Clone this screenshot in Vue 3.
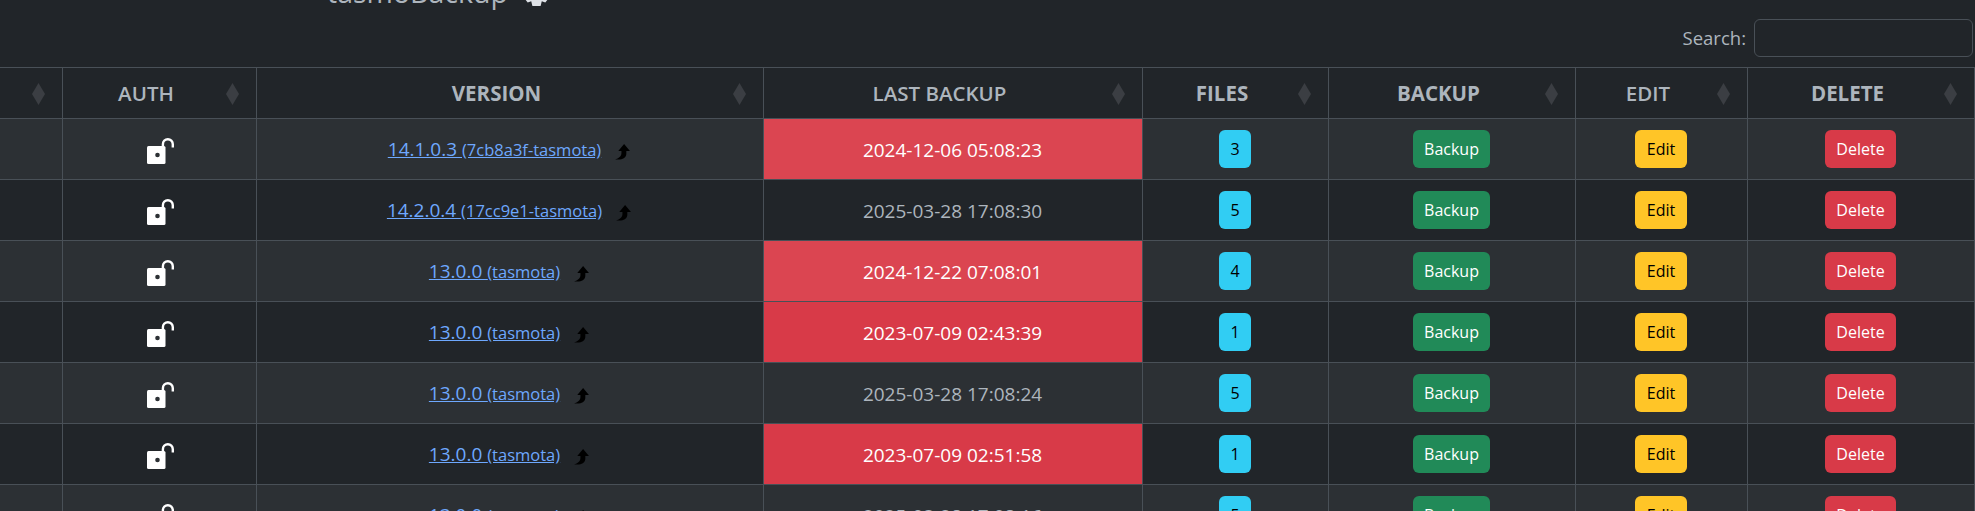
<script setup>
const rows = [
  { v: '14.1.0.3', b: '7cb8a3f-tasmota', date: '2024-12-06 05:08:23', red: true, files: 3 },
  { v: '14.2.0.4', b: '17cc9e1-tasmota', date: '2025-03-28 17:08:30', red: false, files: 5 },
  { v: '13.0.0', b: 'tasmota', date: '2024-12-22 07:08:01', red: true, files: 4 },
  { v: '13.0.0', b: 'tasmota', date: '2023-07-09 02:43:39', red: true, files: 1 },
  { v: '13.0.0', b: 'tasmota', date: '2025-03-28 17:08:24', red: false, files: 5 },
  { v: '13.0.0', b: 'tasmota', date: '2023-07-09 02:51:58', red: true, files: 1 },
  { v: '13.0.0', b: 'tasmota', date: '2025-03-28 17:08:16', red: false, files: 5 }
]
const heads = [
  { t: '', w: 62 },
  { t: 'AUTH', w: 194, cls: 'semi' },
  { t: 'VERSION', w: 507 },
  { t: 'LAST BACKUP', w: 379, cls: 'semi' },
  { t: 'FILES', w: 186 },
  { t: 'BACKUP', w: 247 },
  { t: 'EDIT', w: 172, cls: 'semi' },
  { t: 'DELETE', w: 227 }
]
</script>

<template>
  <div class="page">
    <div class="title">
      <span>tasmoBackup</span>
      <svg class="gear" viewBox="0 0 23 23" width="27" height="27"><path d="M8 0h7l1 4 3-1 4 5-3 3.500 3 3.500-4 5-3-1-1 4H8l-1-4-3 1-4-5 3-3.500L0 8l4-5 3 1z" fill="#dee2e6"/></svg>
    </div>
    <div class="searchbar">
      <label class="search-label">Search:</label>
      <input class="search-input" type="text" />
    </div>
    <table class="grid">
      <colgroup>
        <col v-for="(h, i) in heads" :key="i" :style="{ width: h.w + 'px' }" />
      </colgroup>
      <thead>
        <tr>
          <th v-for="(h, i) in heads" :key="i" :class="h.cls">
            <span>{{ h.t }}</span>
            <svg class="sort" viewBox="0 0 13 22" width="13" height="22"><polygon points="6.500,0 13,11 6.500,22 0,11" fill="#3b3e43"/></svg>
          </th>
        </tr>
      </thead>
      <tbody>
        <tr v-for="(r, i) in rows" :key="i" :class="{ odd: i % 2 === 0 }">
          <td></td>
          <td class="auth">
            <svg class="lock" viewBox="0 0 27 26" width="27" height="26">
              <rect x="0" y="8" width="18.500" height="18" rx="1.500" fill="#fff"/>
              <circle cx="10.500" cy="17" r="2.300" fill="#2c3034"/>
              <path d="M15.900 8V6.200a4.950 4.950 0 0 1 9.900 0V9.500" fill="none" stroke="#fff" stroke-width="2.400"/>
            </svg>
          </td>
          <td>
            <a class="ver" href="#">{{ r.v }} <small class="build">({{ r.b }})</small></a>
            <svg class="up" viewBox="0 0 16 16" width="17" height="17"><path d="M9.500 1 15 7.500h-3.400V10c0 2.600-2 5-6 5.500H1C4.500 14.500 7 12.500 7 9.500V7.500H4z" fill="#000"/></svg>
          </td>
          <td class="date" :class="{ red: r.red }">{{ r.date }}</td>
          <td><span class="btn info">{{ r.files }}</span></td>
          <td><span class="btn success">Backup</span></td>
          <td><span class="btn warning">Edit</span></td>
          <td><span class="btn danger">Delete</span></td>
        </tr>
      </tbody>
    </table>
  </div>
</template>

<style scoped>
.page {
  width: 1975px;
  height: 511px;
  overflow: hidden;
  background: #212529;
  color: #adb5bd;
  font-family: "Open Sans", "Liberation Sans", sans-serif;
}
.title {
  display: flex;
  align-items: flex-start;
  gap: 15px;
  height: 19px;
  padding-left: 327px;
  font-size: 28.500px;
  line-height: 0;
  color: #adb5bd;
}
.title span { display: block; height: 0; line-height: 0; position: relative; top: -8.500px; }
.gear { flex: none; margin-top: -21px; }
.searchbar {
  height: 48px;
  padding-right: 2px;
  box-sizing: border-box;
  display: flex;
  justify-content: flex-end;
  align-items: flex-start;
  gap: 8px;
}
.search-label { font-size: 18.500px; line-height: 38px; }
.search-input {
  width: 219px;
  height: 38px;
  box-sizing: border-box;
  background: #212529;
  border: 1px solid #495057;
  border-radius: 6px;
}
.grid {
  table-layout: fixed;
  width: 1974px;
  border-collapse: collapse;
}
th, td {
  border: 1px solid #495057;
  text-align: center;
  vertical-align: middle;
}
th:first-child, td:first-child { border-left: none; }
th {
  position: relative;
  height: 51px;
  box-sizing: border-box;
  padding: 0 34px 0 8px;
  font-size: 20.500px;
  font-weight: 700;
  color: #adb5bd;
}
th.semi { font-weight: 600; font-size: 20.500px; }
.sort { position: absolute; right: 17px; top: 15px; }
td {
  height: 61px;
  box-sizing: border-box;
  padding: 0 8px;
  background: #212529;
}
tr.odd td { background: #2c3034; }
.ver { color: #6ea8fe; font-size: 19px; text-decoration: underline; }
.build { font-size: 16.500px; }
.up { margin-left: 13px; vertical-align: -4px; }
td.auth { padding-left: 11px; }
.lock { display: block; margin: 3px auto 0; }
.date { font-size: 19px; color: #adb5bd; padding-top: 1px; }
tr td.red { background: #d83a48; color: #fff; }
tr.odd td.red { background: #db4551; }
.btn {
  display: inline-block;
  box-sizing: border-box;
  height: 38px;
  line-height: 38px;
  padding: 0 11.500px;
  border-radius: 6px;
  font-size: 16px;
  vertical-align: middle;
}
.info { background: #31cdf3; color: #000; padding: 0 11px; }
.success { background: #218a58; color: #fff; }
.warning { background: #ffc527; color: #000; }
.danger { background: #d83a48; color: #fff; }
</style>
